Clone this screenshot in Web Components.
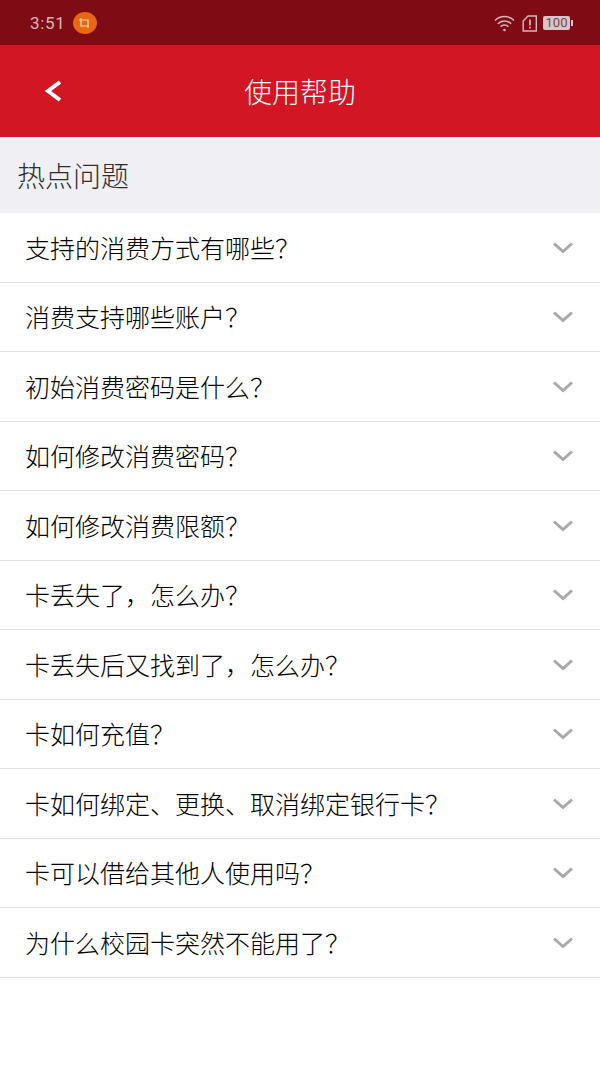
<!DOCTYPE html>
<html lang="zh-CN">
<head>
<meta charset="utf-8">
<style>
  html, body { margin: 0; padding: 0; background: #fff; }
  body { width: 600px; height: 1067px; overflow: hidden; font-family: "Noto Sans CJK SC", "Liberation Sans", sans-serif; font-weight: 300; }
</style>
</head>
<body>
<status-bar></status-bar>
<app-header>使用帮助</app-header>
<section-title>热点问题</section-title>
<faq-row>支持的消费方式有哪些？</faq-row>
<faq-row>消费支持哪些账户？</faq-row>
<faq-row>初始消费密码是什么？</faq-row>
<faq-row>如何修改消费密码？</faq-row>
<faq-row>如何修改消费限额？</faq-row>
<faq-row>卡丢失了，怎么办？</faq-row>
<faq-row>卡丢失后又找到了，怎么办？</faq-row>
<faq-row>卡如何充值？</faq-row>
<faq-row>卡如何绑定、更换、取消绑定银行卡？</faq-row>
<faq-row>卡可以借给其他人使用吗？</faq-row>
<faq-row>为什么校园卡突然不能用了？</faq-row>
<script>
class StatusBar extends HTMLElement {
  constructor() {
    super();
    this.attachShadow({ mode: "open" }).innerHTML = `
<style>
  :host {
    display: flex;
    align-items: center;
    box-sizing: border-box;
    height: 45px;
    padding: 1px 27px 0 30px;
    background: #7f0b15;
    color: #d9b6b9;
    font-family: "Roboto", "Liberation Sans", sans-serif;
    font-size: 17px;
    font-weight: 400;
    letter-spacing: 0.7px;
  }
  .dot {
    display: flex;
    align-items: center;
    justify-content: center;
    width: 24px;
    height: 22px;
    margin-left: 7px;
    border-radius: 50%;
    background: #e8670f;
  }
  .right { display: flex; align-items: center; margin-left: auto; }
  .wifi { margin-right: 7px; }
  .sim { margin-right: 5px; }
  .batt {
    width: 27px;
    height: 14px;
    border-radius: 2px;
    background: #dcc3c6;
    color: #6e4a4f;
    font-size: 13px;
    letter-spacing: 0;
    line-height: 14px;
    text-align: center;
  }
  .tip { width: 2px; height: 6px; margin-left: 1px; background: #dcc3c6; }
</style>
<span>3:51</span>
<span class="dot">
  <svg width="13" height="13" viewBox="0 0 13 13" fill="none" stroke="#f8dcc4" stroke-width="1.2">
    <path d="M1 3h9v8M3 1v8h8"/>
  </svg>
</span>
<span class="right">
  <svg class="wifi" width="21" height="17" viewBox="0 0 21 17" fill="none" stroke="#d9b6b9" stroke-width="1.5">
    <path d="M1 5.5a13.5 13.5 0 0 1 19 0M3.8 8.8a9.5 9.5 0 0 1 13.4 0M6.6 11.6a5.5 5.5 0 0 1 7.8 0"/>
    <circle cx="10.5" cy="15" r="1.3" fill="#d9b6b9" stroke="none"/>
  </svg>
  <svg class="sim" width="16" height="17" viewBox="0 0 16 17" fill="none" stroke="#d9b6b9" stroke-width="1.4">
    <path d="M6 1h8.3v15H1.2V6z"/>
    <path d="M8 4.5v6M8 11.8v1.8" stroke-width="1.7"/>
  </svg>
  <span class="batt">100</span>
  <span class="tip"></span>
</span>`;
  }
}

class AppHeader extends HTMLElement {
  constructor() {
    super();
    this.attachShadow({ mode: "open" }).innerHTML = `
<style>
  :host {
    display: grid;
    grid-template-columns: 100px 1fr 100px;
    align-items: center;
    height: 92px;
    background: #d21624;
    color: #fff;
    font-size: 28px;
  }
  svg { margin-left: 44px; }
  .title { text-align: center; }
</style>
<svg width="20" height="24" viewBox="0 0 20 24" fill="none" stroke="#fff" stroke-width="4">
  <path d="M16 3L4 12l12 9"/>
</svg>
<span class="title"><slot></slot></span>`;
  }
}

class SectionTitle extends HTMLElement {
  constructor() {
    super();
    this.attachShadow({ mode: "open" }).innerHTML = `
<style>
  :host {
    display: flex;
    align-items: center;
    box-sizing: border-box;
    height: 76px;
    padding-left: 17px;
    background: #efeff4;
    color: #2e2e2e;
    font-size: 28px;
  }
</style>
<slot></slot>`;
  }
}

class FaqRow extends HTMLElement {
  constructor() {
    super();
    this.attachShadow({ mode: "open" }).innerHTML = `
<style>
  :host {
    display: flex;
    align-items: center;
    justify-content: space-between;
    box-sizing: border-box;
    height: 69.5px;
    padding: 0 27px 0 25px;
    border-bottom: 1px solid #e2e2e2;
    background: #fff;
    color: #000;
    font-size: 25px;
  }
  span { margin-top: -1px; }
  svg { margin-top: 1px; }
</style>
<span><slot></slot></span>
<svg width="20" height="12" viewBox="0 0 20 12" fill="none" stroke="#a9a9a9" stroke-width="3">
  <path d="M1 1.5l9 8 9-8"/>
</svg>`;
  }
}

customElements.define("status-bar", StatusBar);
customElements.define("app-header", AppHeader);
customElements.define("section-title", SectionTitle);
customElements.define("faq-row", FaqRow);
</script>
</body>
</html>
